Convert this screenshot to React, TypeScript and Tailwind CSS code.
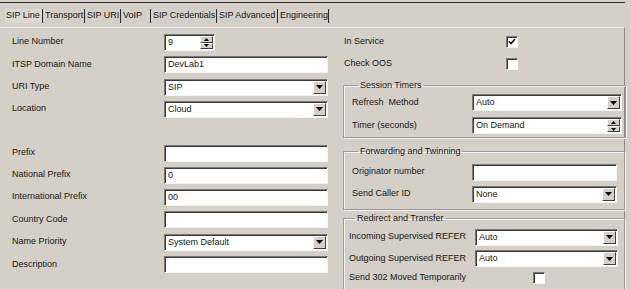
import React from "react";

const sunken =
  "bg-white border border-t-[#7a7a7a] border-l-[#7a7a7a] border-r-[#f4f4f4] border-b-[#f4f4f4] shadow-[inset_1px_1px_0_#3a3a3a]";

function Field({ value = "", className = "" }: { value?: string; className?: string }) {
  return (
    <div className={`h-[17px] shrink-0 ${sunken} flex items-center pl-[3px] ${className}`}>
      <span className="leading-none">{value}</span>
    </div>
  );
}

function Select({ value, className = "" }: { value: string; className?: string }) {
  return (
    <div className={`h-[17px] shrink-0 ${sunken} flex items-center pl-[3px] ${className}`}>
      <span className="leading-none flex-1">{value}</span>
      <div className="w-[13px] h-[13px] mr-[1px] bg-[#d4d0c8] border border-t-white border-l-white border-r-[#404040] border-b-[#404040] flex items-center justify-center">
        <svg width="7" height="4" viewBox="0 0 7 4">
          <path d="M0 0h7L3.5 4z" fill="#000" />
        </svg>
      </div>
    </div>
  );
}

function Spinner({ value, className = "" }: { value: string; className?: string }) {
  return (
    <div className={`h-[17px] shrink-0 ${sunken} flex items-center pl-[3px] ${className}`}>
      <span className="leading-none flex-1">{value}</span>
      <div className="w-[13px] h-[13px] mr-[1px] flex flex-col">
        <div className="h-[7px] bg-[#d4d0c8] border border-t-white border-l-white border-r-[#404040] border-b-[#404040] flex items-center justify-center">
          <svg width="5" height="3" viewBox="0 0 5 3"><path d="M0 3h5L2.5 0z" fill="#000" /></svg>
        </div>
        <div className="h-[6px] bg-[#d4d0c8] border border-t-white border-l-white border-r-[#404040] border-b-[#404040] flex items-center justify-center">
          <svg width="5" height="3" viewBox="0 0 5 3"><path d="M0 0h5L2.5 3z" fill="#000" /></svg>
        </div>
      </div>
    </div>
  );
}

function Check({ checked = false }: { checked?: boolean }) {
  return (
    <div className={`w-[12px] h-[12px] shrink-0 ${sunken} flex items-center justify-center`}>
      {checked && (
        <svg width="8" height="8" viewBox="0 0 8 8">
          <path d="M1 3.5l2 2 4-4.5" stroke="#000" strokeWidth="1.6" fill="none" />
        </svg>
      )}
    </div>
  );
}

function Row({ label, children, className = "" }: { label: string; children: React.ReactNode; className?: string }) {
  return (
    <div className={`flex items-center shrink-0 ${className}`}>
      <div className="w-[152px] shrink-0">{label}</div>
      {children}
    </div>
  );
}

function Tab({ label, className = "" }: { label: string; className?: string }) {
  return (
    <div className={`h-[14px] shrink-0 flex items-center border-r border-[#2a2a2a] ${className}`}>{label}</div>
  );
}

function Group({ title, children, className = "" }: { title: string; children: React.ReactNode; className?: string }) {
  return (
    <fieldset className={`shrink-0 border border-[#9a9a9a] shadow-[1px_1px_0_#f4f4f4,inset_1px_1px_0_#f4f4f4] ${className}`}>
      <legend className="ml-[6px] px-[2px] leading-[12px]">{title}</legend>
      {children}
    </fieldset>
  );
}

export default function App() {
  return (
    <div className="w-[631px] h-[289px] overflow-hidden whitespace-nowrap bg-[#d4d0c8] text-[#161616] text-[9px] font-['Liberation_Sans',Arial,sans-serif] pt-[2px]">
      <div className="border-t border-[#2a2a2a] mr-[6px]">
        <div className="flex items-center h-[24px] pl-[5px] pt-[2px]">
          <Tab label="SIP Line" className="w-[38px] pl-[1px] bg-[#dcd9d2]" />
          <Tab label="Transport" className="w-[42px] pl-[2px]" />
          <Tab label="SIP URI" className="w-[36px] pl-[2px]" />
          <Tab label="VoIP" className="w-[30px] pl-[2px]" />
          <Tab label="SIP Credentials" className="w-[66px] pl-[2px]" />
          <Tab label="SIP Advanced" className="w-[61px] pl-[2px]" />
          <Tab label="Engineering" className="w-[51px] pl-[2px]" />
        </div>
        <div className="h-[258px] border-t border-t-[#eeece8] border-r border-r-[#8a8a8a] flex">
          <div className="w-[328px] shrink-0 pl-[12px] pt-[3px] flex flex-col">
            <Row label="Line Number" className="h-[22px]">
              <Spinner value="9" className="w-[51px]" />
            </Row>
            <Row label="ITSP Domain Name" className="h-[23px]">
              <Field value="DevLab1" className="w-[164px]" />
            </Row>
            <Row label="URI Type" className="h-[22px]">
              <Select value="SIP" className="w-[164px]" />
            </Row>
            <Row label="Location" className="h-[22px]">
              <Select value="Cloud" className="w-[164px]" />
            </Row>
            <div className="h-[22px] shrink-0" />
            <Row label="Prefix" className="h-[22px]">
              <Field className="w-[164px]" />
            </Row>
            <Row label="National Prefix" className="h-[22px]">
              <Field value="0" className="w-[164px]" />
            </Row>
            <Row label="International Prefix" className="h-[22px]">
              <Field value="00" className="w-[164px]" />
            </Row>
            <Row label="Country Code" className="h-[23px]">
              <Field className="w-[164px]" />
            </Row>
            <Row label="Name Priority" className="h-[22px]">
              <Select value="System Default" className="w-[164px]" />
            </Row>
            <Row label="Description" className="h-[23px]">
              <Field className="w-[164px]" />
            </Row>
          </div>
          <div className="ml-[15px] w-[282px] shrink-0 pt-[3px] flex flex-col">
            <div className="h-[22px] shrink-0 flex items-center pl-[1px]">
              <div className="w-[162px]">In Service</div>
              <Check checked />
            </div>
            <div className="h-[22px] shrink-0 flex items-center pl-[1px]">
              <div className="w-[162px]">Check OOS</div>
              <Check />
            </div>
            <Group title="Session Timers" className="mt-[4px] pl-[8px] pr-[3px]">
              <div className="h-[23px] flex items-center">
                <div className="w-[120px]">Refresh&nbsp; Method</div>
                <Select value="Auto" className="w-[150px]" />
              </div>
              <div className="h-[23px] flex items-center">
                <div className="w-[120px]">Timer (seconds)</div>
                <Spinner value="On Demand" className="w-[150px]" />
              </div>
            </Group>
            <Group title="Forwarding and Twinning" className="mt-[7px] pl-[8px] pb-[4px]">
              <div className="h-[26px] flex items-center pt-[4px]">
                <div className="w-[120px]">Originator number</div>
                <Field className="w-[145px]" />
              </div>
              <div className="h-[22px] flex items-center">
                <div className="w-[120px]">Send Caller ID</div>
                <Select value="None" className="w-[145px]" />
              </div>
            </Group>
            <Group title="Redirect and Transfer" className="mt-[2px] pl-[5px] h-[90px]">
              <div className="h-[24px] flex items-center pt-[2px]">
                <div className="w-[126px]">Incoming Supervised REFER</div>
                <Select value="Auto" className="w-[143px]" />
              </div>
              <div className="h-[21px] flex items-center">
                <div className="w-[126px]">Outgoing Supervised REFER</div>
                <Select value="Auto" className="w-[143px]" />
              </div>
              <div className="h-[18px] flex items-center">
                <div className="w-[184px]">Send 302 Moved Temporarily</div>
                <Check />
              </div>
            </Group>
          </div>
        </div>
      </div>
    </div>
  );
}
